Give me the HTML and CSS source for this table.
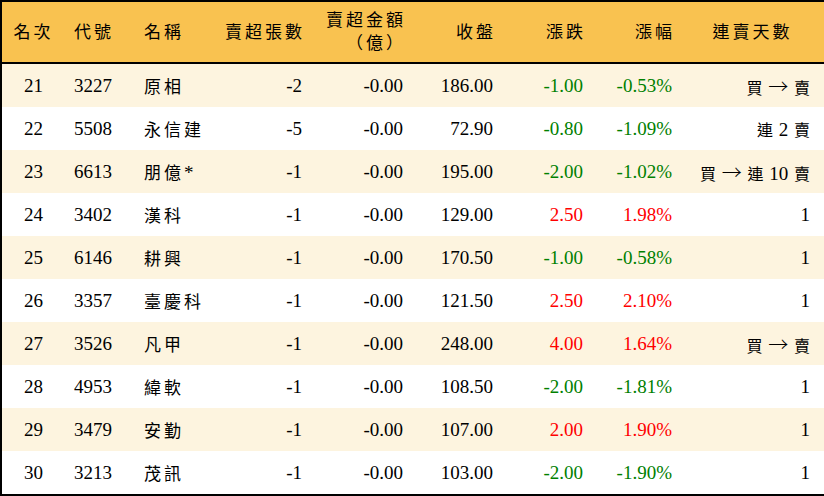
FILE: index.html
```html
<!DOCTYPE html>
<html lang="zh-Hant">
<head>
<meta charset="utf-8">
<link rel="stylesheet" href="styles.css">
</head>
<body>
<table class="rank">
  <colgroup>
    <col class="c1"><col class="c2"><col class="c3"><col class="c4"><col class="c5"><col class="c6"><col class="c7"><col class="c8"><col class="c9">
  </colgroup>
  <thead>
    <tr>
      <th class="ctr">名次</th>
      <th class="lft">代號</th>
      <th class="lft">名稱</th>
      <th class="rgt">賣超張數</th>
      <th class="rgt">賣超金額<br>（億）</th>
      <th class="rgt">收盤</th>
      <th class="rgt">漲跌</th>
      <th class="rgt">漲幅</th>
      <th class="ctr">連賣天數</th>
    </tr>
  </thead>
  <tbody>
    <tr class="alt"><td class="ctr">21</td><td>3227</td><td class="nm">原相</td><td class="rgt">-2</td><td class="rgt">-0.00</td><td class="rgt">186.00</td><td class="rgt dn">-1.00</td><td class="rgt dn">-0.53%</td><td class="rgt days"><span class="k">買</span> <span class="ar">→</span> <span class="k">賣</span></td></tr>
    <tr><td class="ctr">22</td><td>5508</td><td class="nm">永信建</td><td class="rgt">-5</td><td class="rgt">-0.00</td><td class="rgt">72.90</td><td class="rgt dn">-0.80</td><td class="rgt dn">-1.09%</td><td class="rgt days"><span class="k">連</span> 2 <span class="k">賣</span></td></tr>
    <tr class="alt"><td class="ctr">23</td><td>6613</td><td class="nm">朋億<span class="ast">*</span></td><td class="rgt">-1</td><td class="rgt">-0.00</td><td class="rgt">195.00</td><td class="rgt dn">-2.00</td><td class="rgt dn">-1.02%</td><td class="rgt days"><span class="k">買</span> <span class="ar">→</span> <span class="k">連</span> 10 <span class="k">賣</span></td></tr>
    <tr><td class="ctr">24</td><td>3402</td><td class="nm">漢科</td><td class="rgt">-1</td><td class="rgt">-0.00</td><td class="rgt">129.00</td><td class="rgt up">2.50</td><td class="rgt up">1.98%</td><td class="rgt days">1</td></tr>
    <tr class="alt"><td class="ctr">25</td><td>6146</td><td class="nm">耕興</td><td class="rgt">-1</td><td class="rgt">-0.00</td><td class="rgt">170.50</td><td class="rgt dn">-1.00</td><td class="rgt dn">-0.58%</td><td class="rgt days">1</td></tr>
    <tr><td class="ctr">26</td><td>3357</td><td class="nm">臺慶科</td><td class="rgt">-1</td><td class="rgt">-0.00</td><td class="rgt">121.50</td><td class="rgt up">2.50</td><td class="rgt up">2.10%</td><td class="rgt days">1</td></tr>
    <tr class="alt"><td class="ctr">27</td><td>3526</td><td class="nm">凡甲</td><td class="rgt">-1</td><td class="rgt">-0.00</td><td class="rgt">248.00</td><td class="rgt up">4.00</td><td class="rgt up">1.64%</td><td class="rgt days"><span class="k">買</span> <span class="ar">→</span> <span class="k">賣</span></td></tr>
    <tr><td class="ctr">28</td><td>4953</td><td class="nm">緯軟</td><td class="rgt">-1</td><td class="rgt">-0.00</td><td class="rgt">108.50</td><td class="rgt dn">-2.00</td><td class="rgt dn">-1.81%</td><td class="rgt days">1</td></tr>
    <tr class="alt"><td class="ctr">29</td><td>3479</td><td class="nm">安勤</td><td class="rgt">-1</td><td class="rgt">-0.00</td><td class="rgt">107.00</td><td class="rgt up">2.00</td><td class="rgt up">1.90%</td><td class="rgt days">1</td></tr>
    <tr><td class="ctr">30</td><td>3213</td><td class="nm">茂訊</td><td class="rgt">-1</td><td class="rgt">-0.00</td><td class="rgt">103.00</td><td class="rgt dn">-2.00</td><td class="rgt dn">-1.90%</td><td class="rgt days">1</td></tr>
  </tbody>
</table>
</body>
</html>
```
FILE: styles.css
```css
html, body {
  margin: 0;
  padding: 0;
  background: #ffffff;
}
.rank {
  width: 824px;
  border-collapse: collapse;
  table-layout: fixed;
  border: 2px solid #000;
  font-family: "Liberation Serif", "Noto Sans CJK TC", serif;
  font-size: 19px;
  color: #000;
}
.c1 { width: 64px; }
.c2 { width: 70px; }
.c3 { width: 80px; }
.c4 { width: 96px; }
.c5 { width: 101px; }
.c6 { width: 90px; }
.c7 { width: 90px; }
.c8 { width: 89px; }
.c9 { width: 144px; }
.rank th {
  height: 60px;
  padding: 0 9px;
  background: #f9c250;
  border-bottom: 2px solid #000;
  font-weight: normal;
  font-size: 17px;
  letter-spacing: 3px;
  line-height: 23px;
  vertical-align: middle;
}
.rank td {
  height: 43px;
  padding: 0 9px;
  vertical-align: middle;
  white-space: nowrap;
}
.rank tbody tr.alt td {
  background: #fdf4df;
}
.ctr { text-align: center; }
.lft { text-align: left; }
.rgt { text-align: right; }
.rank th.rgt { padding-right: 6px; }
.rank th.ctr { padding: 0; }
.nm {
  font-size: 17px;
  letter-spacing: 3px;
}
.ast {
  font-size: 19px;
  letter-spacing: 0;
}
.days {
  word-spacing: 1px;
}
.k {
  font-size: 16px;
}
.ar {
  font-family: "Noto Sans CJK TC", sans-serif;
  font-size: 20px;
  font-weight: 300;
}
.rank td.days { padding-right: 14px; }
.dn { color: #008000; }
.up { color: #ff0000; }
```
